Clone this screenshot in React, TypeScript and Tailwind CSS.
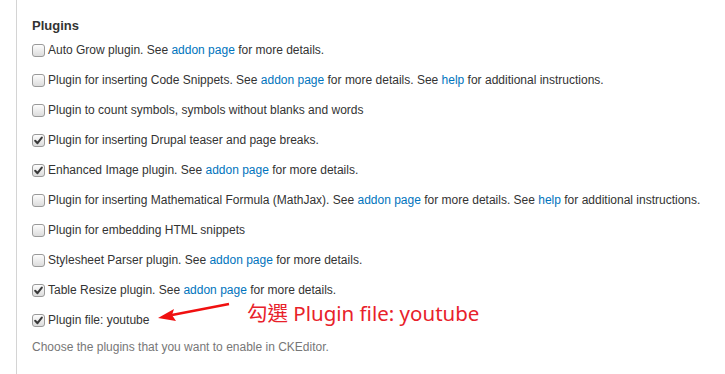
import React from "react";

type Part = string | { link: string };

const rows: { checked: boolean; parts: Part[] }[] = [
  { checked: false, parts: ["Auto Grow plugin. See ", { link: "addon page" }, " for more details."] },
  { checked: false, parts: ["Plugin for inserting Code Snippets. See ", { link: "addon page" }, " for more details. See ", { link: "help" }, " for additional instructions."] },
  { checked: false, parts: ["Plugin to count symbols, symbols without blanks and words"] },
  { checked: true, parts: ["Plugin for inserting Drupal teaser and page breaks."] },
  { checked: true, parts: ["Enhanced Image plugin. See ", { link: "addon page" }, " for more details."] },
  { checked: false, parts: ["Plugin for inserting Mathematical Formula (MathJax). See ", { link: "addon page" }, " for more details. See ", { link: "help" }, " for additional instructions."] },
  { checked: false, parts: ["Plugin for embedding HTML snippets"] },
  { checked: false, parts: ["Stylesheet Parser plugin. See ", { link: "addon page" }, " for more details."] },
  { checked: true, parts: ["Table Resize plugin. See ", { link: "addon page" }, " for more details."] },
  { checked: true, parts: ["Plugin file: youtube"] },
];

function Box({ checked }: { checked: boolean }) {
  return (
    <span className="relative inline-flex h-[13px] w-[13px] shrink-0 items-center justify-center rounded-[3px] border border-[#9a9a9a] bg-gradient-to-b from-[#fdfdfd] to-[#dcdcdc]">
      {checked && (
        <svg width="9" height="9" viewBox="0 0 9 9">
          <path d="M1.2 4.8 L3.5 7.2 L7.8 1.6" fill="none" stroke="#3a3a3a" strokeWidth="2" strokeLinecap="round" strokeLinejoin="round" />
        </svg>
      )}
    </span>
  );
}

export default function App() {
  return (
    <div className="relative h-[374px] w-[725px] overflow-hidden bg-white" style={{ fontFamily: '"Liberation Sans", Arial, sans-serif' }}>
      <div className="ml-[16px] h-full border-l border-[#d4d4d4] pl-[15px] pt-[18px]">
        <div className="h-[17px] text-[13px] font-bold leading-[16px] text-[#333]">Plugins</div>
        <div className="flex flex-col">
          {rows.map((r, i) => (
            <label key={i} className="flex h-[30px] items-center gap-[3px] text-[12px] text-[#333]">
              <Box checked={r.checked} />
              <span className="whitespace-nowrap">
                {r.parts.map((p, j) =>
                  typeof p === "string" ? <span key={j}>{p}</span> : <a key={j} className="text-[#0074bd]">{p.link}</a>
                )}
              </span>
            </label>
          ))}
        </div>
        <div className="mt-[3px] text-[12px] leading-[18px] text-[#777]">Choose the plugins that you want to enable in CKEditor.</div>
      </div>
      <svg className="absolute left-0 top-0" width="725" height="374" viewBox="0 0 725 374">
        <line x1="229" y1="304" x2="172" y2="315" stroke="#f01010" strokeWidth="2.5" />
        <path d="M158 318 L174 309 L172 315 L176 321 Z" fill="#f01010" />
      </svg>
      <div className="absolute left-[247px] top-[299px] text-[20.5px] leading-[28px] text-[#e8212a]" style={{ fontFamily: '"Noto Sans", "Noto Sans CJK TC", sans-serif' }}>
        勾選 Plugin file: youtube
      </div>
    </div>
  );
}
